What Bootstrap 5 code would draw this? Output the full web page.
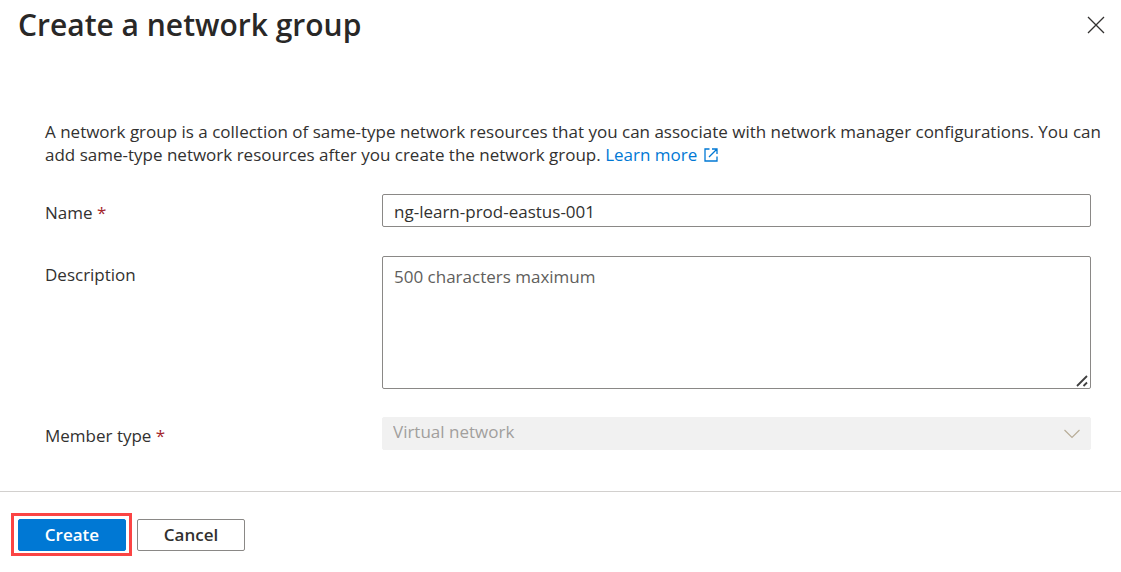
<!DOCTYPE html>
<html lang="en">
<head>
<meta charset="utf-8">
<meta name="viewport" content="width=device-width, initial-scale=1">
<title>Create a network group</title>
<link href="https://cdn.jsdelivr.net/npm/bootstrap@5.3.0/dist/css/bootstrap.min.css" rel="stylesheet">
<style>
  body { font-family: "Segoe UI", "Open Sans", "Noto Sans", sans-serif; font-size: 17px; line-height: 23px; color: #323130; background: #fff; }
  .panel-title { font-size: 30px; line-height: 38px; font-weight: 600; color: #292827; }
  .panel-head { padding: 6px 15px 0 18px; }
  .close-btn { width: 20px; height: 38px; color: #323130; line-height: 0; }
  .panel-body { padding: 76px 30px 41px 45px; }
  .intro { margin: 0 -20px 28px 0; }
  .intro a { color: #0078d4; }
  .intro svg { margin-left: 2px; vertical-align: -1px; }
  .form-line { margin-bottom: 29px; }
  .form-line:nth-last-child(2) { margin-bottom: 28px; }
  .form-line:last-child { margin-bottom: 0; }
  .field-label { width: 337px; padding-top: 7px; }
  .req { color: #a4262c; }
  .panel-body .field { font-size: 17px; line-height: 23px; border: 1px solid #8a8886; border-radius: 2px; padding: 5px 11px 3px; color: #323130; }
  .panel-body input.field, .panel-body select.field { height: 33px; }
  .panel-body textarea.field { height: 133px; padding-top: 8px; display: block; }
  .field::placeholder { color: #605e5c; opacity: 1; }
  textarea.field::-webkit-resizer {
    background: url("data:image/svg+xml,%3Csvg xmlns='http://www.w3.org/2000/svg' width='15' height='15'%3E%3Cpath d='M2 13L12 3M8.500 13L12 9.500' stroke='%23404040' stroke-width='1.800'/%3E%3C/svg%3E") no-repeat right bottom;
  }
  .panel-body select.field:disabled {
    color: #a19f9d; opacity: 1; border-color: #f1f1f1; padding: 2px 36px 6px 10px;
    background: #f1f1f1 url("data:image/svg+xml,%3Csvg xmlns='http://www.w3.org/2000/svg' width='18' height='10' fill='none'%3E%3Cpath d='M1.500 1L9 8.500L16.500 1' stroke='%23b8ad98' stroke-width='1.200'/%3E%3C/svg%3E") no-repeat right 9px center / 18px 10px;
  }
  .panel-foot { border-top: 1px solid #d2d0ce; padding: 21px 11px; gap: 5px; }
  .highlight { border: 3px solid #fb4444; padding: 3px 3px 2px 4px; }
  .panel-foot .btn { width: 108px; height: 32px; padding: 0; border-radius: 2px; font-size: 17px; line-height: 30px; font-weight: 600; }
  .btn-create { background: #0078d4; border-color: #0078d4; color: #fff; }
  .btn-cancel { background: #fff; border-color: #8a8886; color: #323130; }
</style>
</head>
<body>
<header class="panel-head d-flex justify-content-between">
  <h1 class="panel-title mb-0">Create a network group</h1>
  <button type="button" class="close-btn btn border-0 p-0" aria-label="Close">
    <svg width="20" height="20" viewBox="0 0 20 20" fill="none" stroke="currentColor" stroke-width="1.300"><path d="M2 2L18 18M18 2L2 18"/></svg>
  </button>
</header>
<form>
  <main class="panel-body">
    <p class="intro">A network group is a collection of same-type network resources that you can associate with network manager configurations. You can add same-type network resources after you create the network group. <a href="#" class="text-decoration-none text-nowrap">Learn more <svg width="14" height="14" viewBox="0 0 14 14" fill="none" stroke="currentColor" stroke-width="1.300"><path d="M5.500 1H1V13H13V8.500M8 1H13V6M13 1L5 9"/></svg></a></p>
    <div class="form-line d-flex">
      <label class="field-label flex-shrink-0" for="name">Name <span class="req">*</span></label>
      <input id="name" type="text" class="field form-control" value="ng-learn-prod-eastus-001" required>
    </div>
    <div class="form-line d-flex">
      <label class="field-label flex-shrink-0" for="description">Description</label>
      <textarea id="description" class="field form-control" maxlength="500" placeholder="500 characters maximum"></textarea>
    </div>
    <div class="form-line d-flex">
      <label class="field-label flex-shrink-0" for="member">Member type <span class="req">*</span></label>
      <select id="member" class="field form-select" disabled><option>Virtual network</option></select>
    </div>
  </main>
  <footer class="panel-foot d-flex align-items-center">
    <div class="highlight"><button type="submit" class="btn btn-create d-block">Create</button></div>
    <button type="button" class="btn btn-cancel">Cancel</button>
  </footer>
</form>
<script src="https://cdn.jsdelivr.net/npm/bootstrap@5.3.0/dist/js/bootstrap.bundle.min.js"></script>
</body>
</html>
